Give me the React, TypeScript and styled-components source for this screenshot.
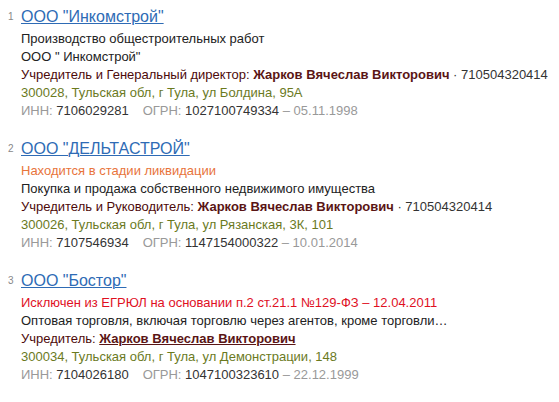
import { FC } from "react";
import styled, { createGlobalStyle } from "styled-components";

const GlobalStyle = createGlobalStyle`
  html, body {
    margin: 0;
    padding: 0;
    background: #fff;
  }

  body {
    font-family: Arial, "Liberation Sans", sans-serif;
    font-size: 13px;
    color: #222;
  }
`;

const List = styled.div`
  display: flex;
  flex-direction: column;
  gap: 19px;
  padding: 7px 0 0 8px;
`;

const Item = styled.div`
  display: grid;
  grid-template-columns: 13px 1fr;
  align-items: baseline;
`;

const Num = styled.span`
  align-self: start;
  margin-top: 4px;
  font-size: 10px;
  line-height: 12px;
  color: #888;
`;

const Title = styled.a`
  font-size: 16px;
  line-height: 20px;
  color: #2e6bb5;
  text-decoration: underline;
  text-underline-offset: 1px;
  text-decoration-thickness: 1px;
`;

const Body = styled.div`
  grid-column: 2;
  margin-top: 3px;
  display: flex;
  flex-direction: column;
`;

const Line = styled.div<{ $tone?: "orange" | "red" | "address" }>`
  line-height: 18px;
  white-space: nowrap;
  color: ${({ $tone }) =>
    $tone === "orange"
      ? "#e8743b"
      : $tone === "red"
      ? "#e0101f"
      : $tone === "address"
      ? "#6b7a1e"
      : "#222"};
`;

const Role = styled.span`
  color: #4d0a0a;
`;

const Person = styled.b<{ $link?: boolean }>`
  color: #5a1515;
  text-decoration: ${({ $link }) => ($link ? "underline" : "none")};
`;

const Inn = styled.span`
  color: #333;
`;

const Muted = styled.span`
  color: #999;
`;

const Gap = styled.span`
  display: inline-block;
  width: 14px;
`;

type Company = {
  name: string;
  status?: { text: string; tone: "orange" | "red" };
  lines: string[];
  role: string;
  personLink?: boolean;
  personInn?: string;
  address: string;
  inn: string;
  ogrn: string;
  date: string;
};

const companies: Company[] = [
  {
    name: 'ООО "Инкомстрой"',
    lines: ["Производство общестроительных работ", 'ООО " Инкомстрой"'],
    role: "Учредитель и Генеральный директор:",
    personInn: "710504320414",
    address: "300028, Тульская обл, г Тула, ул Болдина, 95А",
    inn: "7106029281",
    ogrn: "1027100749334",
    date: "05.11.1998",
  },
  {
    name: 'ООО "ДЕЛЬТАСТРОЙ"',
    status: { text: "Находится в стадии ликвидации", tone: "orange" },
    lines: ["Покупка и продажа собственного недвижимого имущества"],
    role: "Учредитель и Руководитель:",
    personInn: "710504320414",
    address: "300026, Тульская обл, г Тула, ул Рязанская, 3К, 101",
    inn: "7107546934",
    ogrn: "1147154000322",
    date: "10.01.2014",
  },
  {
    name: 'ООО "Бостор"',
    status: {
      text: "Исключен из ЕГРЮЛ на основании п.2 ст.21.1 №129-ФЗ – 12.04.2011",
      tone: "red",
    },
    lines: ["Оптовая торговля, включая торговлю через агентов, кроме торговли…"],
    role: "Учредитель:",
    personLink: true,
    address: "300034, Тульская обл, г Тула, ул Демонстрации, 148",
    inn: "7104026180",
    ogrn: "1047100323610",
    date: "22.12.1999",
  },
];

const App: FC = () => (
  <>
    <GlobalStyle />
    <List>
      {companies.map((c, i) => (
        <Item key={c.inn}>
          <Num>{i + 1}</Num>
          <Title href="#">{c.name}</Title>
          <Body>
            {c.status && <Line $tone={c.status.tone}>{c.status.text}</Line>}
            {c.lines.map((l) => (
              <Line key={l}>{l}</Line>
            ))}
            <Line>
              <Role>{c.role} </Role>
              <Person $link={c.personLink}>Жарков Вячеслав Викторович</Person>
              {c.personInn && <Inn> · {c.personInn}</Inn>}
            </Line>
            <Line $tone="address">{c.address}</Line>
            <Line>
              <Muted>ИНН: </Muted>
              <Inn>{c.inn}</Inn>
              <Gap />
              <Muted>ОГРН: </Muted>
              <Inn>{c.ogrn}</Inn>
              <Muted> – {c.date}</Muted>
            </Line>
          </Body>
        </Item>
      ))}
    </List>
  </>
);

export default App;
